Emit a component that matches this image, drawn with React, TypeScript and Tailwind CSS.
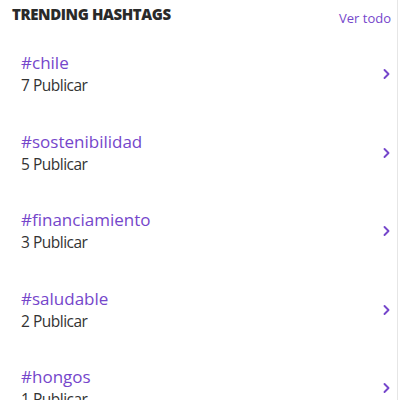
import React from "react";

const items = [
  { tag: "#chile", count: 7 },
  { tag: "#sostenibilidad", count: 5 },
  { tag: "#financiamiento", count: 3 },
  { tag: "#saludable", count: 2 },
  { tag: "#hongos", count: 1 },
];

function Chevron() {
  return (
    <svg width="10" height="14" viewBox="0 0 10 14" fill="none">
      <path d="M3.5 3l4 4-4 4" stroke="#7546cb" strokeWidth="1.9" strokeLinecap="round" strokeLinejoin="round" />
    </svg>
  );
}

export default function App() {
  return (
    <div
      className="w-[398px] h-[400px] overflow-hidden bg-white border-r border-[#e6e6e6]"
      style={{ fontFamily: "'Open Sans', 'Noto Sans', sans-serif" }}
    >
      <div className="flex items-start justify-between h-[35px] pl-[12px] pr-[6px] pt-[4px]">
        <span className="text-[15px] leading-[20px] font-extrabold text-[#2a2a2a] tracking-[-0.4px]">TRENDING HASHTAGS</span>
        <span className="text-[13px] leading-[20px] text-[#7546cb] mt-[4px]">Ver todo</span>
      </div>
      {items.map((it) => (
        <div key={it.tag} className="flex items-center justify-between h-[78.5px] pl-[21px] pr-[6px]">
          <div className="flex flex-col">
            <span className="text-[17px] leading-[22px] text-[#7546cb]">{it.tag}</span>
            <span className="text-[15.5px] leading-[22px] text-[#333333] tracking-[-0.5px]">{it.count} Publicar</span>
          </div>
          <Chevron />
        </div>
      ))}
    </div>
  );
}
